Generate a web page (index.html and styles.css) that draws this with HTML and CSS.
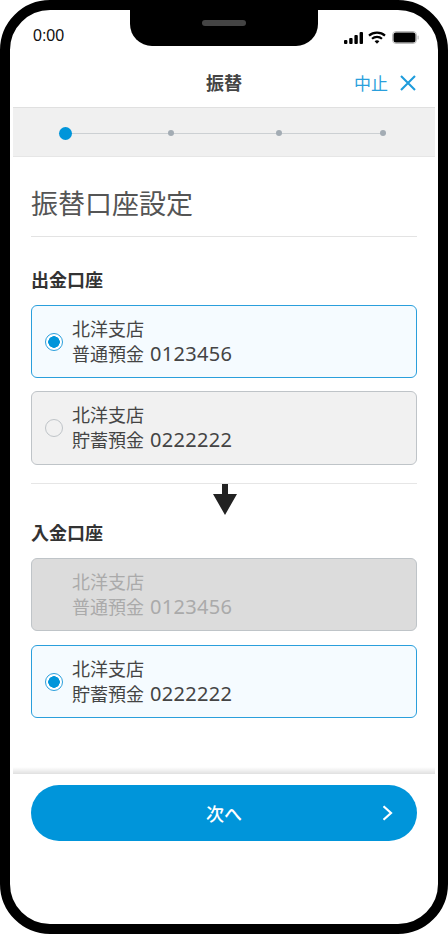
FILE: index.html
```html
<!DOCTYPE html>
<html lang="ja">
<head>
<meta charset="utf-8">
<title>振替</title>
<link rel="stylesheet" href="styles.css">
</head>
<body>
<div class="phone">
  <div class="notch"><span class="speaker"></span></div>
  <div class="status">
    <span class="time">0:00</span>
    <span class="status-icons">
      <svg class="i-signal" width="20" height="12" viewBox="0 0 20 12"><rect x="0" y="8" width="3.4" height="4" rx="1"/><rect x="5.2" y="6" width="3.4" height="6" rx="1"/><rect x="10.4" y="3" width="3.4" height="9" rx="1"/><rect x="15.6" y="0" width="3.4" height="12" rx="1"/></svg>
      <svg class="i-wifi" width="18" height="13" viewBox="0 0 18 13"><path d="M1 4.6C5.4.6 12.6.6 17 4.6" fill="none" stroke="#000" stroke-width="2.2"/><path d="M4 7.800c2.800-2.500 7.200-2.500 10 0" fill="none" stroke="#000" stroke-width="2.2"/><path d="M6.600 10.200c1.400-1.200 3.400-1.200 4.800 0L9 12.800z"/></svg>
      <svg class="i-batt" width="27" height="13" viewBox="0 0 27 13"><rect x=".5" y=".5" width="24" height="12" rx="3.5" fill="none" stroke="#bbb"/><rect x="1.500" y="1.500" width="22" height="10" rx="2.500"/><rect x="25.500" y="4.500" width="1.200" height="4" rx=".6" fill="#bbb"/></svg>
    </span>
  </div>
  <header class="nav">
    <span class="nav-title">振替</span>
    <span class="nav-cancel">中止
      <svg width="16" height="16" viewBox="0 0 16 16"><path d="M1 1l14 14M15 1L1 15" stroke="#1e9cdc" stroke-width="2.100" fill="none"/></svg>
    </span>
  </header>
  <div class="stepper">
    <div class="track">
      <span class="dot dot-on"></span>
      <span class="dot dot-2"></span>
      <span class="dot dot-3"></span>
      <span class="dot dot-4"></span>
    </div>
  </div>
  <main class="content">
    <h1 class="heading">振替口座設定</h1>
    <h2 class="label label-from">出金口座</h2>
    <div class="card card-sel"><span class="radio radio-on"></span><p class="card-text">北洋支店<br>普通預金 <span class="num">0123456</span></p></div>
    <div class="card card-idle"><span class="radio"></span><p class="card-text">北洋支店<br>貯蓄預金 <span class="num">0222222</span></p></div>
    <div class="split">
      <svg class="arrow" width="24" height="31" viewBox="0 0 24 31"><path d="M9 0h6v10h9L12 31 0 10h9z" fill="#222"/></svg>
    </div>
    <h2 class="label label-to">入金口座</h2>
    <div class="card card-off"><span class="radio radio-none"></span><p class="card-text">北洋支店<br>普通預金 <span class="num">0123456</span></p></div>
    <div class="card card-sel card-last"><span class="radio radio-on"></span><p class="card-text">北洋支店<br>貯蓄預金 <span class="num">0222222</span></p></div>
  </main>
  <div class="shade"></div>
  <div class="footer">
    <button class="next" type="button">次へ
      <svg class="chev" width="11" height="16" viewBox="0 0 11 16"><path d="M1.500 1.200L9 8l-7.500 6.800" fill="none" stroke="#fff" stroke-width="2.200"/></svg>
    </button>
  </div>
</div>
</body>
</html>
```

FILE: styles.css
```css
* { box-sizing: border-box; }
html, body { margin: 0; padding: 0; background: #fff; }
body {
  width: 448px;
  height: 934px;
  overflow: hidden;
  font-family: "Noto Sans CJK JP", "Liberation Sans", sans-serif;
  color: #444;
}
.phone {
  position: relative;
  width: 448px;
  height: 934px;
  border: 10px solid #000;
  border-radius: 50px;
  padding: 0 3px;
  background: #fff;
  display: flex;
  flex-direction: column;
  overflow: hidden;
}
.notch {
  position: absolute;
  top: 0;
  left: 120px;
  width: 188px;
  height: 36px;
  background: #000;
  border-radius: 0 0 22px 22px;
}
.speaker {
  position: absolute;
  top: 10px;
  left: 72px;
  width: 44px;
  height: 6px;
  border-radius: 3px;
  background: #444;
}
.status {
  height: 50px;
  display: flex;
  justify-content: space-between;
  align-items: flex-start;
  padding: 14px 16px 0 20px;
}
.time {
  font-family: "Liberation Sans", sans-serif;
  font-size: 16px;
  line-height: 24px;
  color: #111;
}
.status-icons { display: flex; align-items: center; gap: 4px; margin-top: 7px; }
.i-batt { margin-left: 2px; }
.nav {
  position: relative;
  height: 48px;
  display: flex;
  justify-content: center;
  align-items: center;
  border-bottom: 1px solid #e0e0e0;
}
.nav-title { font-size: 18px; font-weight: 700; color: #444; position: relative; top: -2px; }
.nav-cancel {
  position: absolute;
  right: 19px;
  top: 11px;
  display: flex;
  align-items: center;
  gap: 12px;
  font-size: 17px;
  line-height: 24px;
  color: #2a9fdc;
}
.stepper {
  height: 49px;
  background: #f0f0f0;
  border-bottom: 1px solid #e6e6e6;
  padding: 0 49px 0 46px;
  display: flex;
  align-items: center;
}
.track {
  width: 100%;
  height: 14px;
  display: flex;
  align-items: center;
  background: linear-gradient(#ccd0d3, #ccd0d3) center / 100% 1px no-repeat;
  position: relative;
  top: 1px;
}
.dot { width: 6px; height: 6px; border-radius: 50%; background: #a3acb4; flex: none; }
.dot-on { width: 13px; height: 13px; background: #0095da; }
.dot-2 { margin-left: 96px; }
.dot-3 { margin-left: 102px; }
.dot-4 { margin-left: 98px; }
.content { flex: 1; padding: 0 18px; }
.heading {
  margin: 0;
  height: 80px;
  padding-top: 26px;
  font-size: 27px;
  line-height: 40px;
  font-weight: 400;
  color: #555;
  border-bottom: 1px solid #e3e3e3;
}
.label { margin: 0; font-size: 18px; line-height: 24px; font-weight: 700; color: #333; }
.label-from { padding-top: 30px; height: 68px; }
.label-to { height: 41px; padding-top: 3px; }
.card {
  height: 73px;
  border-radius: 6px;
  border: 1px solid #bfc4c8;
  display: flex;
  align-items: center;
  padding-left: 13px;
  margin-bottom: 13px;
}
.card-sel { background: #f5fbff; border-color: #2a9fdc; }
.card-idle { background: #f1f1f1; height: 74px; margin-bottom: 18px; }
.card-off { background: #dcdcdc; color: #aaa; margin-bottom: 14px; }
.card-last { margin-bottom: 0; }
.card-text { margin: 0 0 2px; font-size: 18px; line-height: 25px; color: inherit; }
.num { font-family: "Noto Sans", sans-serif; font-size: 20px; line-height: 1; letter-spacing: .3px; margin-left: 2px; }
.radio {
  width: 18px;
  height: 18px;
  border-radius: 50%;
  border: 1px solid #bfc4c8;
  margin-right: 9px;
  flex: none;
}
.radio-on { border-color: #2a9fdc; background: radial-gradient(circle, #0095da 0 5.500px, #fff 6px); }
.radio-none { visibility: hidden; }
.split { position: relative; height: 31px; border-top: 1px solid #e6e6e6; margin-bottom: 3px; padding-left: 2px; display: flex; justify-content: center; }
.arrow { flex: none; }
.shade {
  height: 7px;
  background: linear-gradient(to bottom, rgba(0,0,0,0), rgba(0,0,0,.12));
}
.footer { height: 150px; padding: 11px 18px 0; }
.next {
  position: relative;
  width: 100%;
  height: 56px;
  border: 0;
  border-radius: 28px;
  background: #0095da;
  color: #fff;
  font-family: inherit;
  font-size: 18px;
  font-weight: 500;
  padding: 0;
}
.chev { position: absolute; right: 24px; top: 20px; }
```
